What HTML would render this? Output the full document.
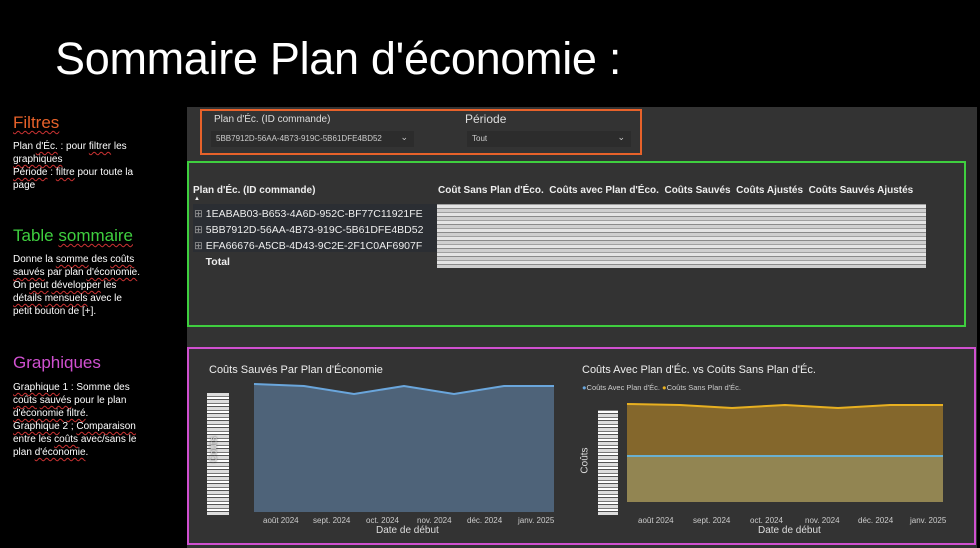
<!DOCTYPE html>
<html><head><meta charset="utf-8"><style>
*{margin:0;padding:0;box-sizing:border-box}
body{width:980px;height:548px;background:#000;position:relative;overflow:hidden;font-family:"Liberation Sans",sans-serif;color:#fff}
.a{position:absolute;white-space:nowrap}
.u{text-decoration:underline wavy #c33;text-decoration-thickness:1px;text-underline-offset:2px}
.side{font-size:10px;line-height:13px;color:#fff}
.h{font-size:17px}
.noise{position:absolute;background:repeating-linear-gradient(0deg,#cfcfcf 0 3px,#8a8a8a 3px 4px,#e4e4e4 4px 7px,#a0a0a0 7px 8px)}
.vnoise{position:absolute;background:repeating-linear-gradient(0deg,#ddd 0 3px,#555 3px 4px,#fff 4px 6px,#777 6px 7px)}
</style></head><body>
<div class="a" style="left:55px;top:32px;font-size:45px;line-height:54px;letter-spacing:-0.3px">Sommaire Plan d'économie :</div>

<div class="a h" style="left:13px;top:113px;color:#e8622a"><span class="u">Filtres</span></div>
<div class="a side" style="left:13px;top:140px">Plan <span class="u">d'Éc.</span> : pour <span class="u">filtrer</span> les<br><span class="u">graphiques</span><br><span class="u">Période</span> : <span class="u">filtre</span> pour toute la<br>page</div>
<div class="a h" style="left:13px;top:226px;color:#3fcf3f">Table <span class="u">sommaire</span></div>
<div class="a side" style="left:13px;top:253px">Donne la <span class="u">somme</span> des <span class="u">coûts</span><br><span class="u">sauvés</span> par plan <span class="u">d'économie</span>.<br>On <span class="u">peut</span> <span class="u">développer</span> les<br><span class="u">détails</span> <span class="u">mensuels</span> avec le<br>petit bouton de [+].</div>
<div class="a h" style="left:13px;top:353px;color:#d050d0">Graphiques</div>
<div class="a side" style="left:13px;top:381px"><span class="u">Graphique</span> 1 : Somme des<br><span class="u">coûts</span> <span class="u">sauvés</span> pour le plan<br><span class="u">d'économie</span> <span class="u">filtré</span>.<br><span class="u">Graphique</span> 2 ; <span class="u">Comparaison</span><br>entre les <span class="u">coûts</span> avec/sans le<br>plan <span class="u">d'économie</span>.</div>

<div class="a" style="left:187px;top:107px;width:790px;height:441px;background:#333"></div>

<!-- filters -->
<div class="a" style="left:200px;top:109px;width:442px;height:46px;border:2px solid #e8622a"></div>
<div class="a" style="left:214px;top:114px;font-size:10px;color:#ddd">Plan d'Éc. (ID commande)</div>
<div class="a" style="left:211px;top:131px;width:203px;height:16px;background:#2c2c2c;font-size:8px;color:#ccc;padding:3px 5px">5BB7912D-56AA-4B73-919C-5B61DFE4BD52<span style="position:absolute;right:6px;top:1px;font-size:9px">⌄</span></div>
<div class="a" style="left:465px;top:112px;font-size:12px;color:#ddd">Période</div>
<div class="a" style="left:467px;top:131px;width:164px;height:16px;background:#2c2c2c;font-size:8px;color:#ccc;padding:3px 5px">Tout<span style="position:absolute;right:6px;top:1px;font-size:9px">⌄</span></div>

<!-- table -->
<div class="a" style="left:187px;top:161px;width:779px;height:166px;border:2px solid #3fcf3f"></div>
<div class="a" style="left:193px;top:185px;font-size:10px;font-weight:bold;color:#eee">Plan d'Éc. (ID commande)</div>
<div class="a" style="left:194px;top:196px;font-size:6px;color:#eee">▲</div>
<div class="a" style="left:438px;top:185px;font-size:10px;font-weight:bold;color:#eee">Coût Sans Plan d'Éco.&nbsp; Coûts avec Plan d'Éco.&nbsp; Coûts Sauvés&nbsp; Coûts Ajustés&nbsp; Coûts Sauvés Ajustés</div>
<div class="a" style="left:193px;top:204px;width:244px;height:48px;background:#2b2e33"></div>
<div class="a" style="left:194px;top:206px;font-size:10.5px;line-height:16px;color:#eee"><span style="color:#999">⊞</span> 1EABAB03-B653-4A6D-952C-BF77C11921FE<br><span style="color:#999">⊞</span> 5BB7912D-56AA-4B73-919C-5B61DFE4BD52<br><span style="color:#999">⊞</span> EFA66676-A5CB-4D43-9C2E-2F1C0AF6907F<br>&nbsp;&nbsp;&nbsp;&nbsp;<b>Total</b></div>
<div class="noise" style="left:437px;top:204px;width:489px;height:64px"></div>

<!-- charts -->
<div class="a" style="left:187px;top:347px;width:789px;height:198px;border:2px solid #d050d0"></div>
<div class="a" style="left:209px;top:364px;font-size:11px;color:#eee">Coûts Sauvés Par Plan d'Économie</div>
<div class="vnoise" style="left:207px;top:393px;width:22px;height:122px"></div>
<div class="a" style="left:201px;top:444px;font-size:10px;color:#ddd;transform:rotate(-90deg);text-shadow:0 0 2px #333">Coûts</div>
<svg class="a" style="left:250px;top:380px" width="310" height="135">
<polygon points="4,4 54,6 104,14 154,6 204,14 254,6 304,6 304,132 4,132" fill="#4e6379"/>
<polyline points="4,4 54,6 104,14 154,6 204,14 254,6 304,6" fill="none" stroke="#6aa6dc" stroke-width="2"/>
</svg>
<div class="a" style="left:263px;top:516px;font-size:8px;color:#ccc">août 2024</div>
<div class="a" style="left:313px;top:516px;font-size:8px;color:#ccc">sept. 2024</div>
<div class="a" style="left:366px;top:516px;font-size:8px;color:#ccc">oct. 2024</div>
<div class="a" style="left:417px;top:516px;font-size:8px;color:#ccc">nov. 2024</div>
<div class="a" style="left:467px;top:516px;font-size:8px;color:#ccc">déc. 2024</div>
<div class="a" style="left:518px;top:516px;font-size:8px;color:#ccc">janv. 2025</div>
<div class="a" style="left:376px;top:525px;font-size:10px;color:#ddd">Date de début</div>

<div class="a" style="left:582px;top:364px;font-size:11px;color:#eee">Coûts Avec Plan d'Éc. vs Coûts Sans Plan d'Éc.</div>
<div class="a" style="left:582px;top:383px;font-size:7.5px;color:#ccc"><span style="color:#6aa6dc">●</span>Coûts Avec Plan d'Éc. <span style="color:#e8b020">●</span>Coûts Sans Plan d'Éc.</div>
<div class="vnoise" style="left:598px;top:410px;width:20px;height:105px"></div>
<div class="a" style="left:572px;top:455px;font-size:10px;color:#ddd;transform:rotate(-90deg)">Coûts</div>
<svg class="a" style="left:625px;top:400px" width="320" height="105">
<polygon points="2,4 55,5 107,8 160,5 213,8 265,5 318,5 318,56 2,56" fill="#84672c"/>
<rect x="2" y="56" width="316" height="46" fill="#928552"/>
<polyline points="2,4 55,5 107,8 160,5 213,8 265,5 318,5" fill="none" stroke="#e8b020" stroke-width="2"/>
<line x1="2" y1="56" x2="318" y2="56" stroke="#6ab0d0" stroke-width="2"/>
</svg>
<div class="a" style="left:638px;top:516px;font-size:8px;color:#ccc">août 2024</div>
<div class="a" style="left:693px;top:516px;font-size:8px;color:#ccc">sept. 2024</div>
<div class="a" style="left:750px;top:516px;font-size:8px;color:#ccc">oct. 2024</div>
<div class="a" style="left:805px;top:516px;font-size:8px;color:#ccc">nov. 2024</div>
<div class="a" style="left:858px;top:516px;font-size:8px;color:#ccc">déc. 2024</div>
<div class="a" style="left:910px;top:516px;font-size:8px;color:#ccc">janv. 2025</div>
<div class="a" style="left:758px;top:525px;font-size:10px;color:#ddd">Date de début</div>
</body></html>
